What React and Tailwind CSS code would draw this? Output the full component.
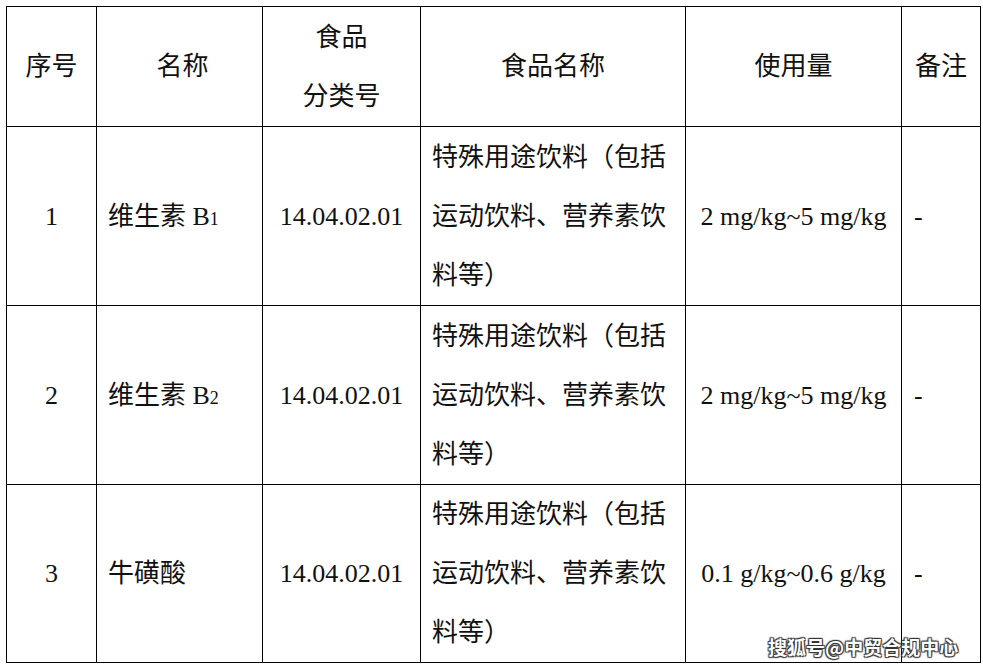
import React from "react";

const rows = [
  { no: "1", name: "维生素 B", sub: "1", code: "14.04.02.01", amount: "2 mg/kg~5 mg/kg" },
  { no: "2", name: "维生素 B", sub: "2", code: "14.04.02.01", amount: "2 mg/kg~5 mg/kg" },
  { no: "3", name: "牛磺酸", sub: "", code: "14.04.02.01", amount: "0.1 g/kg~0.6 g/kg" },
];

// cell styles shared by every row
const cell = "bg-white flex items-center";

export default function App() {
  return (
    <div className="relative w-[983px] h-[667px] bg-white pt-[6px] pl-[6px] text-[#111] font-['Liberation_Serif','Noto_Sans_CJK_SC',serif] text-[26px] leading-[59px]">
      <div className="grid grid-cols-[89px_165px_157px_264px_215px_78px] grid-rows-[119px_178px_178px_177px] gap-px p-px bg-black w-max">
        {/* header */}
        <div className={cell + " justify-center"}>序号</div>
        <div className={cell + " justify-center pl-[6px]"}>名称</div>
        <div className={cell + " justify-center text-center"}>
          <div>
            <div>食品</div>
            <div>分类号</div>
          </div>
        </div>
        <div className={cell + " justify-center"}>食品名称</div>
        <div className={cell + " justify-center"}>使用量</div>
        <div className={cell + " justify-center"}>备注</div>

        {rows.map((r) => (
          <React.Fragment key={r.no}>
            <div className={cell + " justify-center"}>{r.no}</div>
            <div className={cell + " pl-[11px]"}>
              <span>
                {r.name}
                {r.sub && <sub className="text-[18px] bottom-0">{r.sub}</sub>}
              </span>
            </div>
            <div className={cell + " justify-center"}>{r.code}</div>
            <div className={cell + " px-[11px]"}>
              <p>特殊用途饮料（包括运动饮料、营养素饮料等）</p>
            </div>
            <div className={cell + " justify-center"}>{r.amount}</div>
            <div className={cell + " pl-[12px]"}>-</div>
          </React.Fragment>
        ))}
      </div>

      <div className="absolute left-[768px] top-[637px] text-[19px] leading-[19px] font-bold text-white font-['Noto_Sans_CJK_SC',sans-serif] [text-shadow:1px_1px_1px_#333,-1px_-1px_1px_#333,1px_-1px_1px_#333,-1px_1px_1px_#333]">
        搜狐号@中贸合规中心
      </div>
    </div>
  );
}
